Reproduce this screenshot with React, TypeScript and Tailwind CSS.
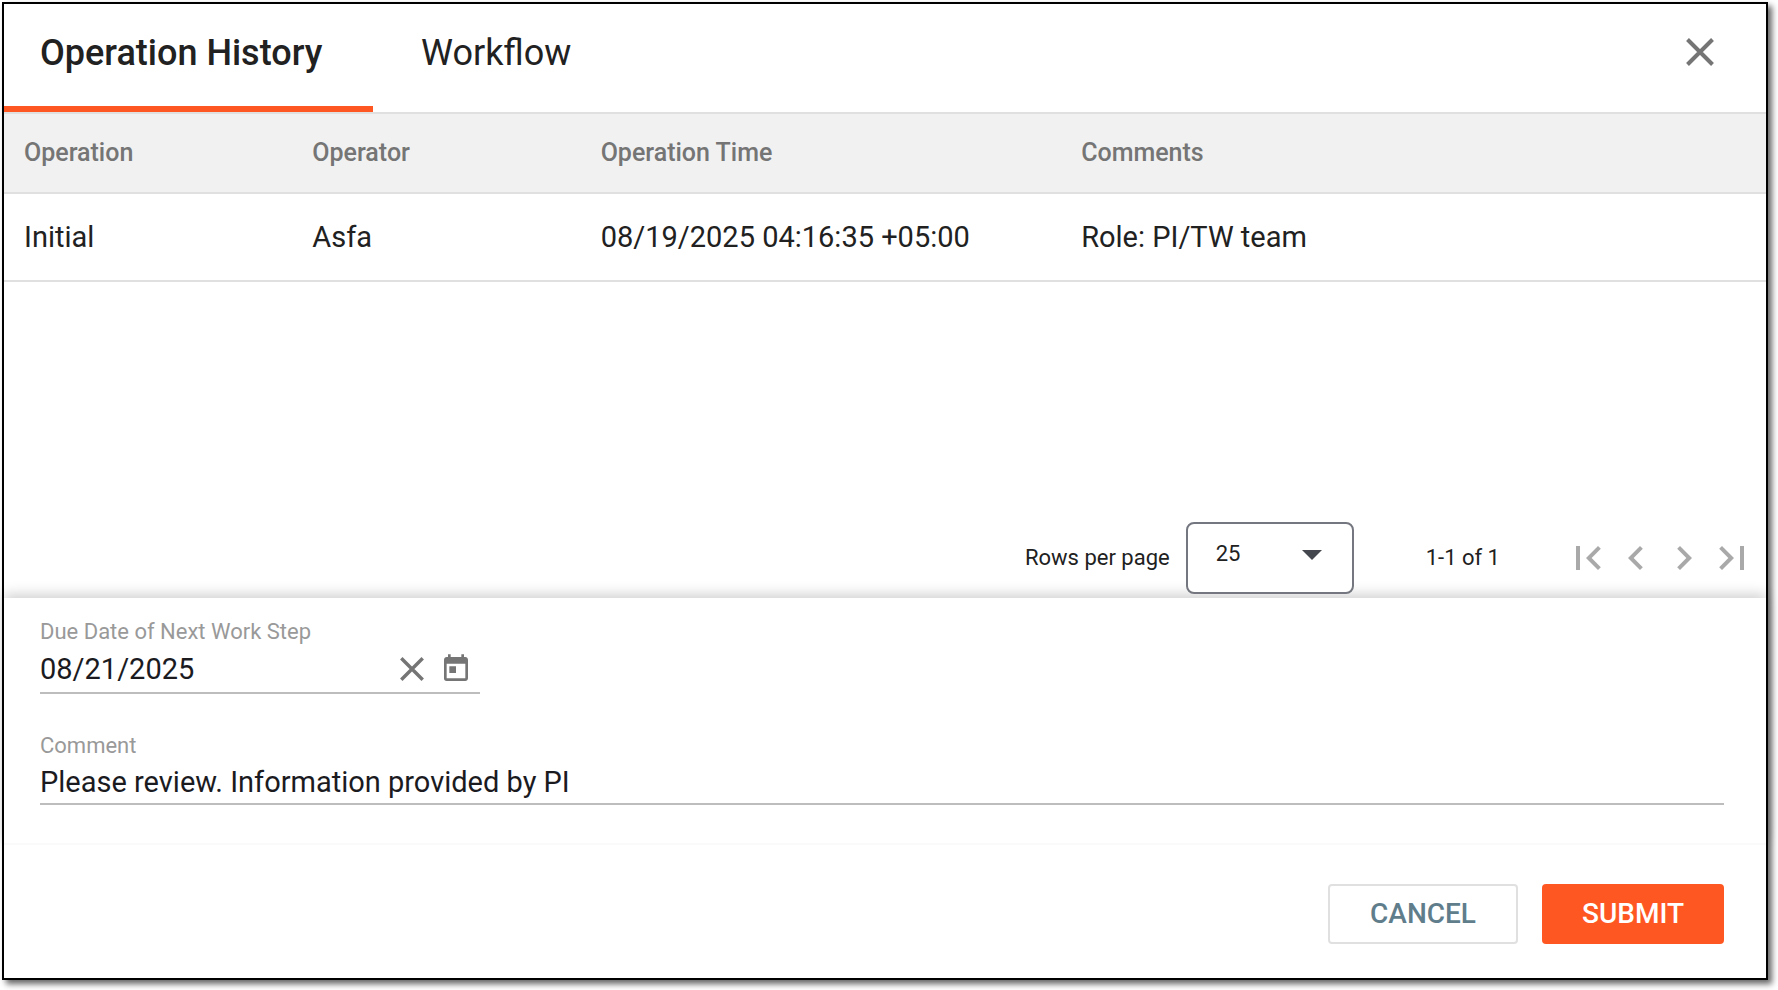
import { useState } from "react";
import {
  MdArrowDropDown,
  MdChevronLeft,
  MdChevronRight,
  MdFirstPage,
  MdLastPage,
  MdToday,
} from "react-icons/md";

type HistoryRow = {
  operation: string;
  operator: string;
  time: string;
  comments: string;
};

const rows: HistoryRow[] = [
  {
    operation: "Initial",
    operator: "Asfa",
    time: "08/19/2025 04:16:35 +05:00",
    comments: "Role: PI/TW team",
  },
];

function CloseIcon({ className }: { className: string }) {
  return (
    <svg viewBox="0 0 28 28" className={className} fill="none" stroke="currentColor" strokeWidth="4" aria-hidden="true">
      <path d="M1.5 1.5 26.5 26.5M26.5 1.5 1.5 26.5" />
    </svg>
  );
}

function Header() {
  return (
    <header className="flex items-stretch justify-between border-b-2 border-[#e0e0e0]">
      <div role="tablist" className="flex">
        <button
          role="tab"
          aria-selected="true"
          className="min-w-[369px] border-b-6 border-[#ff5722] px-9 pt-7 pb-8 text-left text-4xl/[42px] font-medium"
        >
          Operation History
        </button>
        <button role="tab" aria-selected="false" className="border-b-6 border-transparent px-12 pt-7 pb-8 text-4xl/[42px]">
          Workflow
        </button>
      </div>
      <button aria-label="Close" className="mr-[18px] mb-3 flex size-24 items-center justify-center text-[#757575]">
        <CloseIcon className="size-7" />
      </button>
    </header>
  );
}

function HistoryTable() {
  return (
    <table className="w-full table-fixed text-left">
      <colgroup>
        <col className="w-9/55" />
        <col className="w-9/55" />
        <col className="w-15/55" />
        <col />
      </colgroup>
      <thead>
        <tr className="h-[79px] border-b-2 border-[#e0e0e0] bg-[#f1f1f1] text-[25px]/8 text-[#757575]">
          <th className="px-5 font-medium">Operation</th>
          <th className="px-5 font-medium">Operator</th>
          <th className="px-5 font-medium">Operation Time</th>
          <th className="px-5 font-medium">Comments</th>
        </tr>
      </thead>
      <tbody>
        {rows.map((row) => (
          <tr key={row.time} className="h-22 border-b-2 border-[#e0e0e0] text-[29px]/9">
            <td className="px-5">{row.operation}</td>
            <td className="px-5">{row.operator}</td>
            <td className="px-5">{row.time}</td>
            <td className="px-5">{row.comments}</td>
          </tr>
        ))}
      </tbody>
    </table>
  );
}

function Paginator() {
  return (
    <div className="flex items-center justify-end pr-2.5 pb-1 text-[22px]/8">
      <label htmlFor="page-size" className="mr-4">
        Rows per page
      </label>
      <div className="relative">
        <select
          id="page-size"
          defaultValue="25"
          className="h-18 w-42 appearance-none rounded-lg border-2 border-[#74777f] bg-white pb-2 pl-7"
        >
          <option>10</option>
          <option>25</option>
          <option>50</option>
        </select>
        <MdArrowDropDown className="pointer-events-none absolute top-2 right-[18px] size-12 text-[#44474e]" />
      </div>
      <span className="mr-16 ml-18">1-1 of 1</span>
      <div className="flex text-[#a9a9a9]">
        <button aria-label="First page" disabled>
          <MdFirstPage className="size-12" />
        </button>
        <button aria-label="Previous page" disabled>
          <MdChevronLeft className="size-12" />
        </button>
        <button aria-label="Next page" disabled>
          <MdChevronRight className="size-12" />
        </button>
        <button aria-label="Last page" disabled>
          <MdLastPage className="size-12" />
        </button>
      </div>
    </div>
  );
}

function StepForm() {
  const [dueDate, setDueDate] = useState("08/21/2025");
  const [comment, setComment] = useState("Please review. Information provided by PI");

  return (
    <div className="border-b-2 border-[#fafafa] bg-white pt-5 pr-[42px] pb-[38px] pl-9 shadow-[0_-4px_12px_rgba(0,0,0,0.18)]">
      <label htmlFor="due-date" className="block text-[22px]/7 text-[#999]">
        Due Date of Next Work Step
      </label>
      <div className="flex h-12 w-110 items-center border-b-2 border-[#bdbdbd] text-[#757575]">
        <input
          id="due-date"
          value={dueDate}
          onChange={(e) => setDueDate(e.target.value)}
          className="min-w-0 flex-1 text-[29px]/9 text-[#1b1b1f] outline-none"
        />
        <button aria-label="Clear date" onClick={() => setDueDate("")}>
          <CloseIcon className="size-6" />
        </button>
        <button aria-label="Open calendar" className="mr-2 ml-4">
          <MdToday className="size-8" />
        </button>
      </div>
      <label htmlFor="comment" className="mt-9 block text-[22px]/8 text-[#999]">
        Comment
      </label>
      <input
        id="comment"
        value={comment}
        onChange={(e) => setComment(e.target.value)}
        className="block h-[43px] w-full border-b-2 border-[#bdbdbd] pb-0.5 text-[29px]/9 text-[#1b1b1f] outline-none"
      />
    </div>
  );
}

export default function App() {
  return (
    <div className="flex min-h-screen flex-col bg-white pt-0.5 pr-2.5 pb-2.5 pl-0.5 font-['Roboto',sans-serif] text-[#212121]">
      <main className="flex flex-1 flex-col border-2 border-black bg-white shadow-[4px_4px_6px_rgba(0,0,0,0.6)]">
        <Header />
        <section className="flex flex-1 flex-col justify-between">
          <HistoryTable />
          <Paginator />
        </section>
        <StepForm />
        <footer className="relative flex justify-end gap-6 bg-white pt-[39px] pr-[42px] pb-[34px] text-[28px]/8 font-medium">
          <button className="h-15 w-[190px] rounded border-2 border-[#e0e0e0] text-[#607d8b]">CANCEL</button>
          <button className="h-15 w-[182px] rounded bg-[#ff5722] text-white">SUBMIT</button>
        </footer>
      </main>
    </div>
  );
}
